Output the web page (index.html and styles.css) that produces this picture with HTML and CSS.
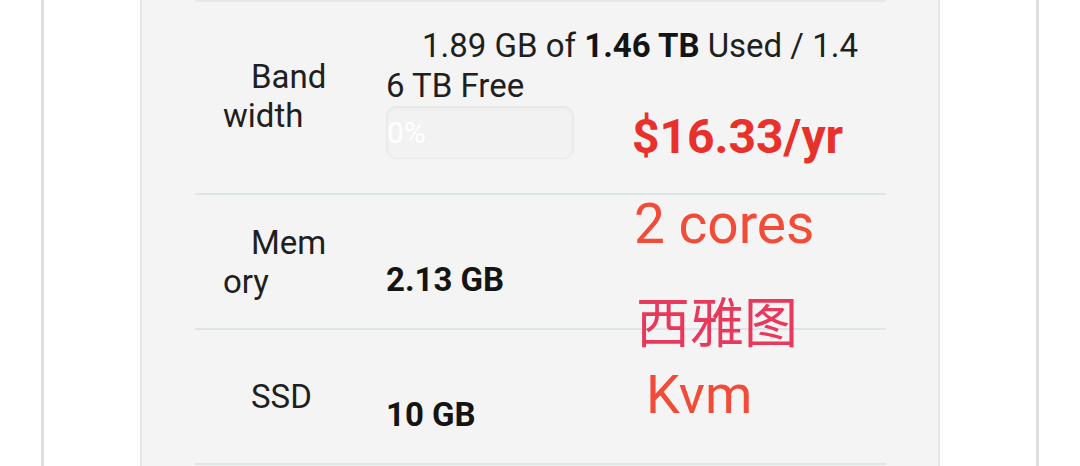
FILE: index.html
```html
<!DOCTYPE html>
<html>
<head>
<meta charset="utf-8">
<link rel="stylesheet" href="styles.css">
</head>
<body>
<div class="frame">
  <div class="panel">
    <div class="row first">
      <div class="label label-bw">Band width</div>
      <div class="value value-bw">1.89 GB of <b>1.46 TB</b> Used / 1.46 TB Free
        <div class="bar"><span class="bar-text">0%</span></div>
      </div>
    </div>
    <div class="row">
      <div class="label">Memory</div>
      <div class="value value-low"><b>2.13 GB</b></div>
    </div>
    <div class="row">
      <div class="label">SSD</div>
      <div class="value value-low"><b>10 GB</b></div>
    </div>
  </div>
</div>
<div class="note note-price">$16.33/yr</div>
<div class="note note-cores">2 cores</div>
<div class="note note-city">西雅图</div>
<div class="note note-kvm">Kvm</div>
</body>
</html>
```
FILE: styles.css
```css
html, body {
  margin: 0;
  padding: 0;
  background: #ffffff;
  height: 466px;
  overflow: hidden;
  font-family: Roboto, "Liberation Sans", sans-serif;
}
.frame {
  box-sizing: border-box;
  margin-left: 41px;
  width: 998px;
  height: 466px;
  border-left: 3px solid #dedede;
  border-right: 3px solid #dedede;
  padding-left: 96px;
}
.panel {
  box-sizing: border-box;
  width: 800px;
  height: 466px;
  background: #f4f4f4;
  border-left: 2px solid #e6e6e6;
  border-right: 2px solid #e6e6e6;
  padding: 0 52px 0 53px;
}
.row {
  display: grid;
  grid-template-columns: 110px 480px;
  column-gap: 53px;
  padding-left: 28px;
  height: 133px;
  border-bottom: 2px solid #dde5e9;
  color: #1f1f1f;
}
.row.first {
  height: 191px;
  border-top: 2px solid #e3e8ea;
}
.label {
  align-self: center;
  font-size: 33px;
  line-height: 39px;
  text-indent: 28px;
  word-break: break-all;
}
.label-bw {
  margin-bottom: 4px;
}
.value {
  align-self: start;
  font-size: 33px;
  line-height: 40px;
  text-indent: 36px;
  word-break: break-all;
}
.value b {
  font-weight: 700;
  color: #141414;
}
.value-bw {
  padding-top: 24px;
}
.value-low {
  padding-top: 65px;
  text-indent: 0;
}
.bar {
  box-sizing: border-box;
  width: 188px;
  height: 53px;
  border-radius: 10px;
  background: #f2f2f2;
  border: 1px solid #e8e8e8;
  box-shadow: inset 0 1px 3px rgba(0, 0, 0, 0.06);
  text-indent: 0;
}
.bar-text {
  display: block;
  color: #ffffff;
  font-size: 30px;
  line-height: 51px;
}
.note {
  position: absolute;
  line-height: 1;
  white-space: nowrap;
}
.note-price {
  left: 632px;
  top: 113px;
  font-size: 48px;
  font-weight: 700;
  color: #e8312b;
}
.note-cores {
  left: 634px;
  top: 197px;
  font-size: 55px;
  color: #f24b37;
}
.note-city {
  left: 636px;
  top: 293px;
  font-size: 54px;
  font-family: "Noto Sans CJK SC", sans-serif;
  color: #e8385b;
}
.note-kvm {
  left: 646px;
  top: 368px;
  font-size: 54px;
  color: #f24b37;
}
```
